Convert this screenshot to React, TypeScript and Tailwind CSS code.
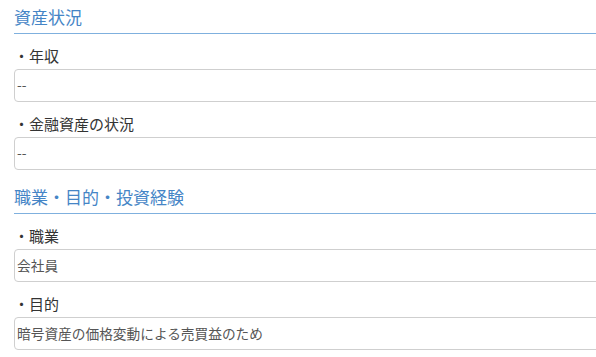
const sections = [
  {
    title: "資産状況",
    fields: [
      { label: "・年収", value: "--" },
      { label: "・金融資産の状況", value: "--" }
    ]
  },
  {
    title: "職業・目的・投資経験",
    fields: [
      { label: "・職業", value: "会社員" },
      { label: "・目的", value: "暗号資産の価格変動による売買益のため" }
    ]
  }
];

function Field({ label, value }: { label: string; value: string }) {
  return (
    <div>
      <div className="mt-[12px] mb-[3px] h-[20px] text-[15px] leading-[20px] text-[#333]">{label}</div>
      <div className="flex h-[33px] w-[calc(100%+20px)] items-center rounded-[4px] border border-[#cfcfcf] bg-white pl-[2px] text-[13.7px] text-[#555]">
        <span className={value === "--" ? "-mt-[3px]" : ""}>{value}</span>
      </div>
    </div>
  );
}

export default function App() {
  return (
    <div
      className="h-[357px] w-[596px] overflow-hidden bg-white pl-[14px]"
      style={{ fontFamily: '"Noto Sans CJK JP", "Noto Sans", sans-serif' }}
    >
      {sections.map((s, i) => (
        <section key={s.title} className={i > 0 ? "mt-[10px]" : ""}>
          <h2 className="h-[33px] pt-px text-[17px] leading-[32px] text-[#4585c6]">{s.title}</h2>
          <div className="h-px w-full bg-[#7fb0de]" />
          {s.fields.map((f) => (
            <Field key={f.label} label={f.label} value={f.value} />
          ))}
        </section>
      ))}
    </div>
  );
}
